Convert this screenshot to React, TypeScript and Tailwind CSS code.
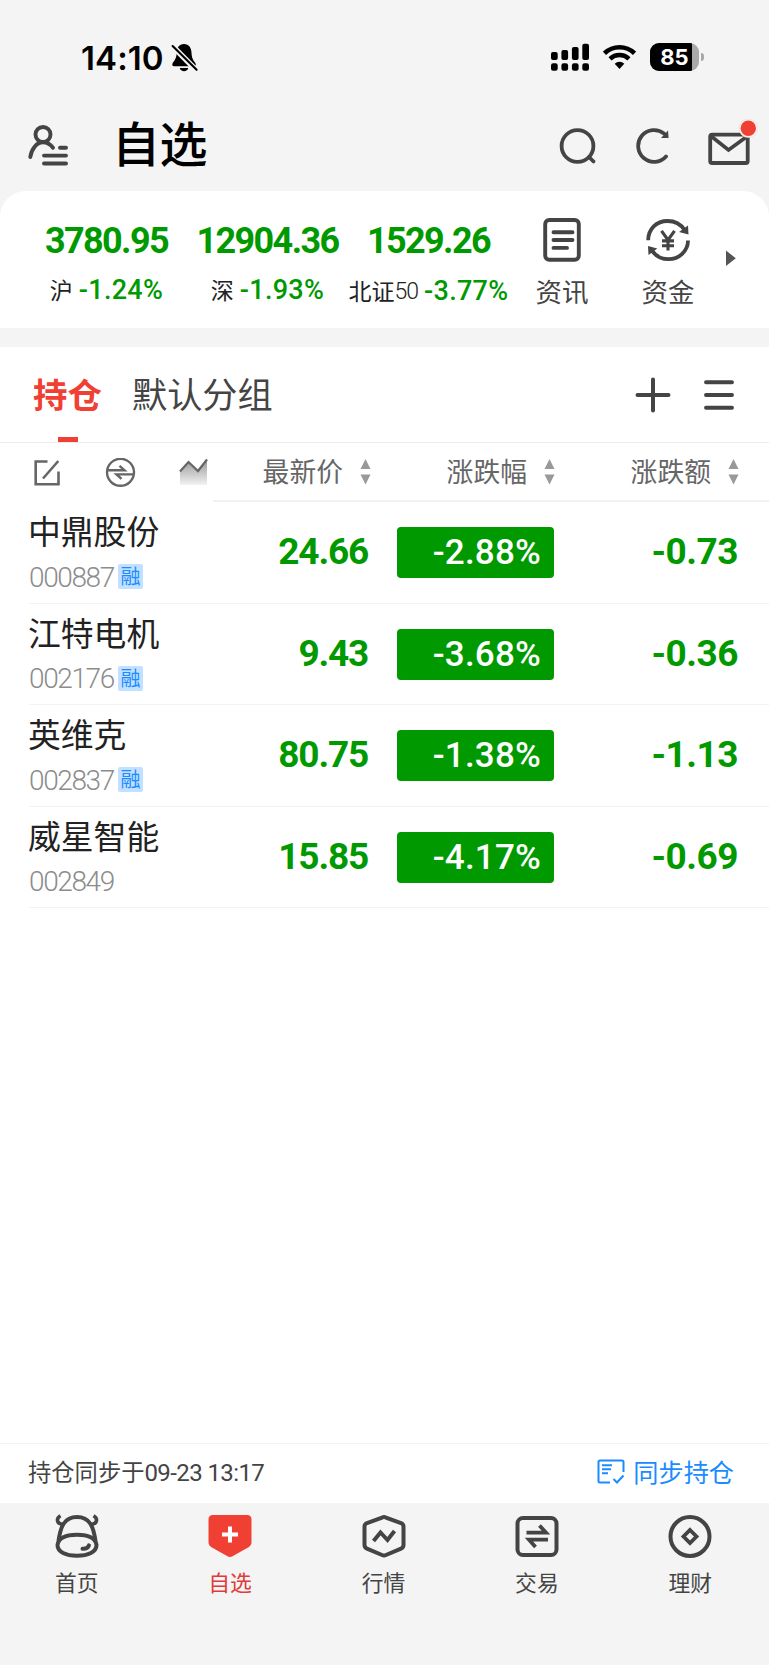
import type { ReactNode } from 'react';
import clsx from 'clsx';

interface Stock {
  name: string;
  code: string;
  margin: boolean;
  price: string;
  percent: string;
  change: string;
}

const stocks: Stock[] = [
  { name: '中鼎股份', code: '000887', margin: true, price: '24.66', percent: '-2.88%', change: '-0.73' },
  { name: '江特电机', code: '002176', margin: true, price: '9.43', percent: '-3.68%', change: '-0.36' },
  { name: '英维克', code: '002837', margin: true, price: '80.75', percent: '-1.38%', change: '-1.13' },
  { name: '威星智能', code: '002849', margin: false, price: '15.85', percent: '-4.17%', change: '-0.69' },
];

const indices = [
  { value: '3780.95', label: '沪', percent: '-1.24%' },
  { value: '12904.36', label: '深', percent: '-1.93%' },
  { value: '1529.26', label: '北证', suffix: '50', percent: '-3.77%' },
];

function StatusBar() {
  return (
    <div className="flex h-[115px] items-start pl-[81px] pr-[65px] pt-[42px] text-black">
      <span className="w-[90px] whitespace-nowrap font-['Inter'] text-[33px] font-semibold leading-[32px] tracking-[0.1px]">14:10</span>
      <svg width="28" height="30" viewBox="0 0 28 30">
        <path d="M13 2C8 2 6 6 5.700 10.500C5.500 15.500 4.300 17.500 2 20.500C.7 22.400 1 24.200 3.200 24.200H23C25.200 24.200 25.300 22.400 24 20.500C21.700 17.500 20.700 15.500 20.500 10.500C20.200 6 18 2 13 2Z" />
        <path d="M8.800 26H17.200C16.700 30.200 9.300 30.200 8.800 26Z" />
        <path d="M0 2.500L25.500 28.500" stroke="#f4f4f4" strokeWidth="5.500" />
        <path d="M1.600 4L25.600 27.800" stroke="black" strokeWidth="2.100" strokeLinecap="round" />
      </svg>
      <div className="ml-auto flex items-start">
        <svg width="38" height="30" viewBox="0 0 38 30">
          <rect x="0" y="10" width="6.700" height="8" rx="2" />
          <rect x="10.400" y="8" width="6.700" height="10" rx="2" />
          <rect x="20.900" y="5" width="6.700" height="13" rx="2" />
          <rect x="31.300" y="1.700" width="6.700" height="16.300" rx="2" />
          {[0, 10.4, 20.9, 31.3].map(x => (
            <rect key={x} x={x} y="21.200" width="6.700" height="7.500" rx="2.200" />
          ))}
        </svg>
        <svg className="ml-[14px]" width="33" height="30" viewBox="0 0 33 30" fill="none" stroke="black" strokeWidth="4.500">
          <path d="M1.500 11.300A21.700 21.700 0 0 1 31.500 11.300" />
          <path d="M7 16.800A14 14 0 0 1 26 16.800" />
          <path d="M16.500 27L11.700 21.700A7.200 7.200 0 0 1 21.300 21.700Z" fill="black" stroke="none" />
        </svg>
        <div className="ml-[14px] mt-px flex h-[28px] w-[49px] items-center overflow-hidden rounded-[9px] bg-[#a9a9a9]">
          <span className="flex h-full w-[42px] items-center justify-center bg-black pl-[7px] font-['Inter'] text-[22px] font-bold leading-none text-white">85</span>
        </div>
        <div className="ml-[2px] mt-[11px] h-[8px] w-[3px] rounded-r-full bg-[#a9a9a9]" />
      </div>
    </div>
  );
}

function TitleBar() {
  return (
    <div className="flex h-[76px] items-start pl-[28px] pr-[9px]">
      <svg className="mt-[9px]" width="41" height="44" viewBox="0 0 41 44" fill="none" stroke="#444" strokeWidth="3.900" strokeLinecap="round">
        <circle cx="15" cy="10.500" r="7.500" />
        <path d="M2.300 33C3.500 25 8.500 18.300 15 18.300C19 18.300 22.500 20.500 25 23.700" />
        <path d="M32 23.800H38M16 31.600H38M16 39.500H38" />
      </svg>
      <h1 className="ml-[43px] mt-px text-[48px] font-medium leading-[50px] tracking-[-0.500px] text-black">自选</h1>
      <div className="ml-auto flex">
        <svg className="mt-[12px]" width="38" height="38" viewBox="0 0 38 38" fill="none" stroke="#444" strokeWidth="3.800" strokeLinecap="round">
          <circle cx="18.500" cy="19" r="15.900" />
          <path d="M30 30L34.500 34.500" />
        </svg>
        <svg className="ml-[39px] mt-[12px]" width="38" height="38" viewBox="0 0 38 38" fill="none" stroke="#444" strokeWidth="3.800" strokeLinecap="round">
          <path d="M30 29.500A15.900 15.900 0 1 1 28 6.500" />
          <path d="M32 3.500L32.600 11H25Z" fill="#444" stroke="none" />
        </svg>
        <svg className="ml-[34px] mt-px" width="52" height="50" viewBox="0 0 52 50" fill="none">
          <rect x="2.200" y="18.700" width="37.500" height="28.300" rx="2" stroke="#444" strokeWidth="3.800" />
          <path d="M3.500 20.500L20.500 34L39 20.500" stroke="#444" strokeWidth="3.600" />
          <circle cx="40.300" cy="12.300" r="9.300" fill="#f4f4f4" stroke="#f9d5d2" strokeWidth=".6" />
          <circle cx="40.300" cy="12.300" r="7.700" fill="#f04033" />
        </svg>
      </div>
    </div>
  );
}

function Shortcut({ label, children }: { label: string; children: ReactNode }) {
  return (
    <div className="flex w-[106px] flex-col items-center">
      {children}
      <span className="mt-[14px] text-[26.500px] leading-[30px] text-[#444]">{label}</span>
    </div>
  );
}

function IndexCard() {
  return (
    <section className="flex h-[137px] rounded-t-[26px] bg-white pl-[26px] pt-[27px]">
      {indices.map(item => (
        <div key={item.label} className="flex w-[161px] shrink-0 flex-col items-center whitespace-nowrap text-[#090]">
          <span className="font-['Roboto'] text-[36px] font-bold leading-[46px] tracking-[-1.600px]">{item.value}</span>
          <div className="mt-[5px] flex items-center leading-[42px]">
            <span className="-mt-[2px] text-[23px] text-[#222]">{item.label}</span>
            {item.suffix && <span className="mt-[2px] font-['Roboto'] text-[23px] font-light tracking-[-1px] text-[#222]">{item.suffix}</span>}
            <span className="ml-[6px] font-['Roboto'] text-[27px] font-medium tracking-[0.300px]">{item.percent}</span>
          </div>
        </div>
      ))}
      <div className="flex">
        <Shortcut label="资讯">
          <svg width="44" height="44" viewBox="0 0 44 44" fill="none" stroke="#444" strokeWidth="3.900" strokeLinecap="round">
            <rect x="5.200" y="2" width="33.600" height="39.800" rx="4" />
            <path d="M13.500 14.300H32.500M13.500 22H32.500M13.500 29.900H27" />
          </svg>
        </Shortcut>
        <Shortcut label="资金">
          <svg width="44" height="44" viewBox="0 0 44 44" fill="none" stroke="#444" strokeWidth="3.800">
            <path d="M2.200 22.300C2.200 11 10.500 3 21.500 3C29 3 35 6.500 38.500 12" />
            <path d="M42 22.500C42 33 33 41.200 22.500 41.200C15 41.200 9.500 38 6 32.500" />
            <path d="M42 7.500L42.500 16.500L33 14ZM2.500 37L2 28L11.300 30.500Z" fill="#444" stroke="none" />
            <path d="M15.500 12.800L22 22L28.500 12.800M22 22V32.500M16 22.900H28M16 27.800H28" strokeWidth="3.100" />
          </svg>
        </Shortcut>
      </div>
      <svg className="ml-[4px] mt-[30px] shrink-0" width="12" height="20" viewBox="0 0 12 20">
        <path d="M1 2.500L10.800 10.300L1 18Z" fill="#555" />
      </svg>
    </section>
  );
}

function Tabs() {
  return (
    <div className="flex h-[96px] items-start border-b border-[#ededed] pl-[33px] pr-[34px] pt-[23px]">
      <div className="flex h-[72px] flex-col items-center text-[#f04033]">
        <span className="-mt-px text-[34.500px] font-bold leading-[48px]">持仓</span>
        <span className="mt-auto h-[5px] w-[20px] bg-[#f04033]" />
      </div>
      <span className="-mt-px ml-[30px] text-[35.200px] leading-[48px] text-[#444]">默认分组</span>
      <div className="ml-auto flex h-[50px] items-center gap-[31px]">
        <svg width="38" height="38" viewBox="0 0 38 38" stroke="#444" strokeWidth="4" strokeLinecap="round">
          <path d="M19 3.500V34.500M3.500 19H34.500" />
        </svg>
        <svg width="32" height="38" viewBox="0 0 32 38" stroke="#444" strokeWidth="3.900" strokeLinecap="round">
          <path d="M3 6.300H29M3 19H29M3 31.700H29" />
        </svg>
      </div>
    </div>
  );
}

function SortHead({ label, className }: { label: string; className: string }) {
  return (
    <div className={clsx('flex items-center justify-end', className)}>
      <span className="-mt-[2px] text-[26.800px] leading-[40px] text-[#666]">{label}</span>
      <svg className="ml-[17px] mt-px" width="11" height="26" viewBox="0 0 11 26" fill="#999">
        <path d="M5.500 0L10.500 10H.5ZM5.500 25.500L10.500 15.500H.5Z" />
      </svg>
    </div>
  );
}

function TableHead() {
  return (
    <div className="flex h-[59px]">
      <div className="flex w-[213px] pl-[34px] pt-[15px]">
        <svg width="27" height="28" viewBox="0 0 27 28" fill="none" stroke="#666" strokeWidth="2.600">
          <path d="M13.500 3.500H1.700V26.300H24.500V13.500" />
          <path d="M9 20.500L24.300 3" />
        </svg>
        <svg className="ml-[44px]" width="31" height="31" viewBox="0 0 31 31" fill="none" stroke="#666" strokeWidth="2.400">
          <circle cx="15.500" cy="14.300" r="13.500" />
          <path d="M2.800 12.200H19.500L14.500 7.800M28 16.400H11.500L16.500 20.800" />
        </svg>
        <svg className="ml-[43px]" width="29" height="28" viewBox="0 0 29 28" fill="none">
          <defs>
            <linearGradient id="area" x1="0" y1="0" x2="0" y2="1">
              <stop offset="0" stopColor="#999" />
              <stop offset="1" stopColor="#f2f2f2" />
            </linearGradient>
          </defs>
          <path d="M1 13.500L9.500 4L19 13L28 2V27H1Z" fill="url(#area)" />
          <path d="M1 13.500L9.500 4L19 13L28 1.500" stroke="#666" strokeWidth="2.200" />
        </svg>
      </div>
      <div className="flex flex-1 border-b-2 border-[#f1f1f1]">
        <SortHead className="w-[158px]" label="最新价" />
        <SortHead className="w-[184px]" label="涨跌幅" />
        <SortHead className="w-[184px]" label="涨跌额" />
      </div>
    </div>
  );
}

function StockRow({ stock }: { stock: Stock }) {
  return (
    <div className="ml-[29px] flex h-[101.600px] items-start border-b border-[#f3f3f3] font-['Roboto'] text-[#090]">
      <div className="w-[180px]">
        <p className="-ml-px mt-[3px] font-['Noto_Sans_CJK_SC'] text-[32.800px] leading-[50px] text-[#222]">{stock.name}</p>
        <div className="mt-[9px] flex h-[25px] items-center">
          <span className="w-[89px] pt-[2px] text-[28px] font-light leading-none tracking-[-1.400px] text-[#8c8c8c]">{stock.code}</span>
          {stock.margin && (
            <span className="flex h-[25px] w-[25px] items-center justify-center rounded-[2px] bg-[#c2e0ff] pb-px font-['Noto_Sans_CJK_SC'] text-[20px] leading-none text-[#1a8cff]">融</span>
          )}
        </div>
      </div>
      <span className="mt-[24px] w-[159px] text-right text-[37px] font-bold leading-[51px] tracking-[-1.200px]">{stock.price}</span>
      <span className="ml-[29px] mt-[25px] h-[51px] w-[157px] rounded-[4px] bg-[#090] pr-[13px] text-right text-[35px] font-medium leading-[52px] tracking-[0.200px] text-white">
        {stock.percent}
      </span>
      <span className="mt-[24px] w-[184px] text-right text-[37px] font-bold leading-[51px] tracking-[-0.500px]">{stock.change}</span>
    </div>
  );
}

function SyncBar() {
  return (
    <div className="flex h-[60px] items-center border-t border-[#f3f3f3] pb-[3px] pl-[28px] pr-[35px] text-[#444]">
      <span className="text-[23.300px] leading-none">持仓同步于</span>
      <span className="pt-[2px] font-['Roboto'] text-[24px] leading-none tracking-[-0.600px]">09-23 13:17</span>
      <div className="ml-auto flex items-center text-[#1a8cff]">
        <svg width="28" height="26" viewBox="0 0 28 26" fill="none" stroke="currentColor" strokeWidth="2">
          <path d="M13 23.500H3Q1.500 23.500 1.500 22V3Q1.500 1.500 3 1.500H25Q26.500 1.500 26.500 3V13" />
          <path d="M5 6.300H15M5 10.300H14M5 14.300H11M16.500 20L20 23.500L26.500 16.500" />
        </svg>
        <span className="ml-[8px] text-[25.200px] leading-none">同步持仓</span>
      </div>
    </div>
  );
}

function NavItem({ label, active, children }: { label: string; active?: boolean; children: ReactNode }) {
  return (
    <div className={clsx('flex flex-1 flex-col items-center', active ? 'text-[#e03a3a]' : 'text-[#444]')}>
      <svg width="44" height="44" viewBox="0 0 44 44" fill="none" stroke="#444" strokeWidth="4">
        {children}
      </svg>
      <span className="mt-[9px] text-[21.800px] leading-[30px]">{label}</span>
    </div>
  );
}

function BottomNav() {
  return (
    <nav className="flex h-[162px] pr-[2px] pt-[11px]">
      <NavItem label="首页">
        <path d="M8.500 10.500C1.500 10 .8 4.500 5.500 1.800M35.500 10.500C42.500 10 43.200 4.500 38.500 1.800" strokeWidth="3.600" />
        <path d="M3.500 27C5.500 13 9 3 22 3C35 3 38.500 13 40.500 27" />
        <path d="M2.500 31C3.500 24 11 20.700 22 20.700C33 20.700 40.500 24 41.500 31C41.500 38 33 41.700 22 41.700C11 41.700 2.500 38 2.500 31Z" />
        <path d="M27.500 34.800C31 35 33.300 33.700 34 31.300" strokeLinecap="round" />
      </NavItem>
      <NavItem label="自选" active>
        <path d="M5 1H39Q43.500 1 43.500 5.500V28Q43.500 31.500 40.500 33.300L24.500 42.300Q22 43.800 19.500 42.300L3.500 33.300Q.5 31.500 .5 28V5.500Q.5 1 5 1Z" fill="#f04033" stroke="none" />
        <path d="M22 12.500V28.500M14 20.500H30" stroke="#fff" />
      </NavItem>
      <NavItem label="行情">
        <path d="M20 3.600Q22 2.500 24 3.600L39 9Q41.500 10 41.500 12.500V31Q41.500 33.500 39 34.700L24 41Q22 42 20 41L5 34.700Q2.500 33.500 2.500 31V12.500Q2.500 10 5 9Z" />
        <path d="M11.500 27L18.500 18.500L25.500 26L32.500 17" />
      </NavItem>
      <NavItem label="交易">
        <rect x="2.500" y="4" width="39" height="37" rx="5.500" />
        <path d="M11.500 18.700H31L24.500 11.500M33 25.700H14L20.500 33" strokeWidth="3.800" />
      </NavItem>
      <NavItem label="理财">
        <circle cx="22" cy="22.500" r="19.500" />
        <path d="M22 16L28.500 22.500L22 29L15.500 22.500Z" strokeWidth="3.800" />
      </NavItem>
    </nav>
  );
}

export default function App() {
  return (
    <div className="flex h-[1665px] w-[769px] flex-col overflow-hidden bg-[#f4f4f4] font-['Noto_Sans_CJK_SC',sans-serif]">
      <StatusBar />
      <TitleBar />
      <IndexCard />
      <main className="mt-[19px] flex flex-1 flex-col bg-white">
        <Tabs />
        <TableHead />
        {stocks.map(stock => (
          <StockRow key={stock.code} stock={stock} />
        ))}
        <div className="mt-auto">
          <SyncBar />
        </div>
      </main>
      <BottomNav />
    </div>
  );
}
